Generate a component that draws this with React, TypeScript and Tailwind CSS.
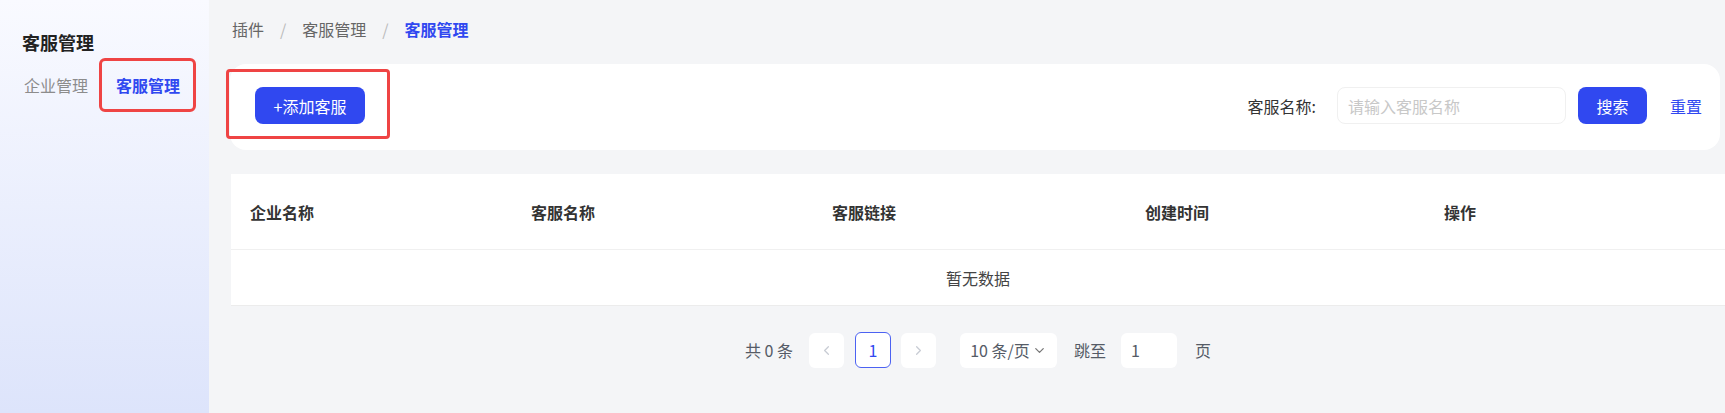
import { ChevronLeft, ChevronRight, ChevronDown } from 'lucide-react';

const font = { fontFamily: '"Noto Sans CJK SC", "Noto Sans", sans-serif' };

const columns = [
  { title: '企业名称', w: 'w-[281px]' },
  { title: '客服名称', w: 'w-[301px]' },
  { title: '客服链接', w: 'w-[313px]' },
  { title: '创建时间', w: 'w-[299px]' },
  { title: '操作', w: 'flex-1' },
];

function Sidebar() {
  return (
    <aside className="w-[209px] h-[413px] shrink-0 bg-gradient-to-b from-[#f9faff] to-[#dde4fb] pl-[22px] pt-[30px]">
      <div className="text-[18px] leading-[24px] font-bold text-[#222]">客服管理</div>
      <div className="flex items-center mt-[4px] h-[54px]">
        <span className="text-[16px] pl-[2px] text-[#8c8c8c]">企业管理</span>
        <span className="ml-[11px] h-[54px] w-[97px] flex items-center pl-[14px] border-[3px] border-[#ef4444] rounded-[6px] text-[16px] font-bold text-[#3048f0]">
          客服管理
        </span>
      </div>
    </aside>
  );
}

function TopBar() {
  return (
    <div className="relative flex items-center justify-between h-[86px] bg-white rounded-[16px] mr-[5px] pl-[25px] pr-[18px]">
      {/* highlight box */}
      <div className="absolute left-[-4px] top-[5px] w-[164px] h-[70px] border-[3px] border-[#ef4444] rounded-[4px]" />
      <button className="relative h-[37px] w-[110px] rounded-[8px] bg-[#3048f0] text-white text-[16px] -mt-[3px]">
        +添加客服
      </button>
      <div className="flex items-center -mt-[3px]">
        <span className="text-[16px] text-[#333]">客服名称:</span>
        <div className="ml-[21px] h-[37px] w-[229px] rounded-[8px] border border-[#f0f0f0] flex items-center pl-[10px] text-[16px] text-[#c8c8c8]">
          请输入客服名称
        </div>
        <button className="ml-[12px] h-[37px] w-[69px] rounded-[8px] bg-[#3048f0] text-white text-[16px]">搜索</button>
        <span className="ml-[23px] text-[16px] text-[#3048f0]">重置</span>
      </div>
    </div>
  );
}

function DataTable() {
  return (
    <div className="mt-[24px] ml-[1px] bg-white border-b border-[#ececec]">
      <div className="flex h-[76px] items-center border-b border-[#f0f0f0]">
        {columns.map((c) => (
          <div key={c.title} className={`${c.w} pl-[19px] text-[16px] font-bold text-[#333]`}>
            {c.title}
          </div>
        ))}
      </div>
      <div className="h-[55px] flex items-center justify-center text-[16px] text-[#444]">暂无数据</div>
    </div>
  );
}

function Pagination() {
  return (
    <div className="ml-[1px] mt-[26px] flex items-center justify-center text-[16px] text-[#555b66]">
      <span>共 0 条</span>
      <span className="ml-[16px] h-[35px] w-[35px] rounded-[6px] bg-white flex items-center justify-center text-[#c8ccd4]">
        <ChevronLeft className="w-[15px] h-[15px]" />
      </span>
      <span className="ml-[11px] h-[36px] w-[36px] rounded-[6px] bg-white border border-[#4c62f2] flex items-center justify-center text-[#3048f0]">
        1
      </span>
      <span className="ml-[10px] h-[35px] w-[35px] rounded-[6px] bg-white flex items-center justify-center text-[#c8ccd4]">
        <ChevronRight className="w-[15px] h-[15px]" />
      </span>
      <span className="ml-[24px] h-[35px] w-[97px] rounded-[6px] bg-white flex items-center justify-center gap-[2px]">
        10 条/页
        <ChevronDown className="w-[15px] h-[15px] text-[#777]" />
      </span>
      <span className="ml-[17px]">跳至</span>
      <span className="ml-[15px] h-[35px] w-[56px] rounded-[6px] bg-white flex items-center pl-[10px]">1</span>
      <span className="ml-[18px]">页</span>
    </div>
  );
}

export default function App() {
  return (
    <div className="flex w-[1725px] h-[413px] overflow-hidden bg-[#f4f5f7]" style={font}>
      <Sidebar />
      <main className="flex-1 pl-[21px] pt-[17px]">
        <nav className="flex items-center h-[24px] text-[16px] text-[#666] pl-[2px]">
          <span>插件</span>
          <span className="mx-[16px] text-[#bbb]">/</span>
          <span>客服管理</span>
          <span className="mx-[16px] text-[#bbb]">/</span>
          <span className="font-bold text-[#3048f0]">客服管理</span>
        </nav>
        <div className="mt-[23px]">
          <TopBar />
          <DataTable />
          <Pagination />
        </div>
      </main>
    </div>
  );
}
